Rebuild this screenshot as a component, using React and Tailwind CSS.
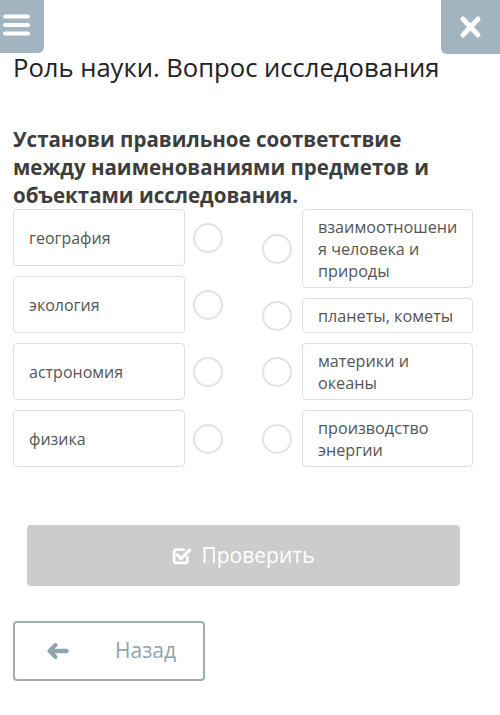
import React from 'react';

const leftItems = ['география', 'экология', 'астрономия', 'физика'];
const rightItems = [
  ['взаимоотношени', 'я человека и', 'природы'],
  ['планеты, кометы'],
  ['материки и', 'океаны'],
  ['производство', 'энергии'],
];

const Circle = () => (
  <div className="w-[30px] h-[30px] shrink-0 rounded-full border-2 border-[#e2e2e2] bg-white" />
);

const CheckSquare = () => (
  <svg width="19" height="19" viewBox="0 0 18 18" fill="none">
    <path d="M14.5 9.5v4.5a2 2 0 0 1-2 2H4a2 2 0 0 1-2-2V5.5a2 2 0 0 1 2-2h8" stroke="#fff" strokeWidth="2.6" />
    <path d="M5 8.5l3.5 3.5L16.5 4" stroke="#fff" strokeWidth="3" strokeLinecap="round" strokeLinejoin="round" />
  </svg>
);

const ArrowLeft = () => (
  <svg width="22" height="16" viewBox="0 0 22 16" fill="none">
    <path d="M8.5 2L2.5 8l6 6" stroke="#90a4ae" strokeWidth="4" strokeLinecap="round" strokeLinejoin="round" />
    <path d="M3.5 8H19.5" stroke="#90a4ae" strokeWidth="4.5" strokeLinecap="round" />
  </svg>
);

const App = () => {
  return (
    <div className="w-[500px] h-[715px] bg-white overflow-hidden" style={{ fontFamily: '"Open Sans", sans-serif' }}>
      <div className="flex justify-between h-[54px]">
        <div className="w-[44px] h-[53px] bg-[#a2b4bf] rounded-br-md">
          <svg width="44" height="53" viewBox="0 0 44 53">
            <g stroke="#ffffff" strokeWidth="4" strokeLinecap="round">
              <line x1="5" y1="16.5" x2="28" y2="16.5" />
              <line x1="5" y1="25" x2="28" y2="25" />
              <line x1="5" y1="33.5" x2="28" y2="33.5" />
            </g>
          </svg>
        </div>
        <div className="w-[59px] h-[54px] bg-[#a2b4bf] rounded-bl-md">
          <svg width="59" height="54" viewBox="0 0 59 54">
            <g stroke="#ffffff" strokeWidth="5" strokeLinecap="round">
              <line x1="22" y1="19" x2="37" y2="35" />
              <line x1="37" y1="19" x2="22" y2="35" />
            </g>
          </svg>
        </div>
      </div>

      <h1 className="px-[13px] -mt-[2px] text-[25.6px] leading-[32px] text-[#222] font-normal">
        Роль науки. Вопрос исследования
      </h1>

      <p className="mt-[41px] px-[13px] text-[20.5px] leading-[28px] font-bold text-[#3d3d3d]">
        Установи правильное соответствие
        <br />
        между наименованиями предметов и
        <br />
        объектами исследования.
      </p>

      <div className="flex items-start px-[13px] gap-[39px]">
        <div className="flex flex-col gap-[10px]">
          {leftItems.map((item) => (
            <div key={item} className="flex items-center gap-[8px]">
              <div className="w-[172px] min-h-[57px] flex items-center px-[15px] border-[1.5px] border-[#dedede] rounded-[4px] text-[16px] leading-[22px] text-[#555]">
                {item}
              </div>
              <Circle />
            </div>
          ))}
        </div>
        <div className="flex flex-col gap-[10px]">
          {rightItems.map((lines) => (
            <div key={lines[0]} className="flex items-center gap-[10px]">
              <Circle />
              <div className="w-[171px] py-[5.5px] px-[15px] border-[1.5px] border-[#dedede] rounded-[4px] text-[16.2px] leading-[22px] text-[#555]">
                {lines.map((l) => (
                  <div key={l}>{l}</div>
                ))}
              </div>
            </div>
          ))}
        </div>
      </div>

      <div className="mt-[58px] ml-[27px] w-[433px] h-[61px] bg-[#cccccc] rounded-[4px] flex items-center justify-center gap-[10px] text-white text-[21px]">
        <CheckSquare />
        <span>Проверить</span>
      </div>

      <div className="mt-[35px] ml-[13px] w-[192px] h-[60px] border-2 border-[#9dadb5] rounded-[4px] flex items-center text-[#90a4ae] text-[21px]">
        <span className="ml-[32px] flex"><ArrowLeft /></span>
        <span className="ml-[46px]">Назад</span>
      </div>
    </div>
  );
};

export default App;
